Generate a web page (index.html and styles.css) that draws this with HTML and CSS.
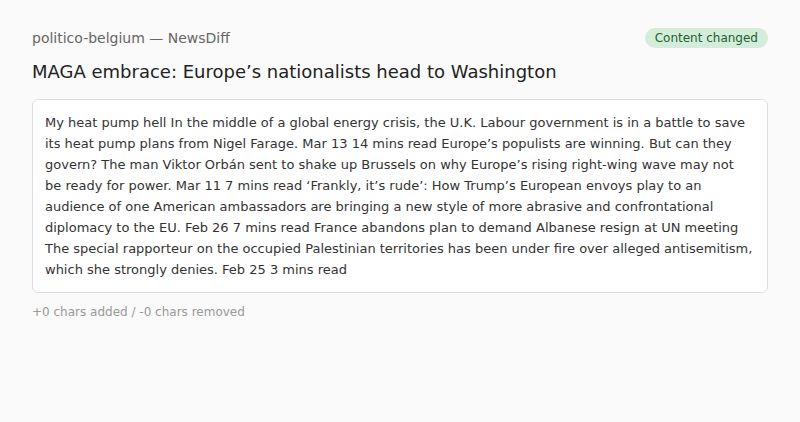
FILE: index.html
```html
<!DOCTYPE html>
<html>
<head>
<meta charset="utf-8">
<link rel="stylesheet" href="styles.css">
</head>
<body>
<div class="page">
  <div class="header">
    <span class="source">politico-belgium — NewsDiff</span>
    <span class="badge">Content changed</span>
  </div>
  <h1 class="title">MAGA embrace: Europe’s nationalists head to Washington</h1>
  <div class="content">My heat pump hell In the middle of a global energy crisis, the U.K. Labour government is in a battle to save its heat pump plans from Nigel Farage. Mar 13 14 mins read Europe’s populists are winning. But can they govern? The man Viktor Orbán sent to shake up Brussels on why Europe’s rising right-wing wave may not be ready for power. Mar 11 7 mins read ‘Frankly, it’s rude’: How Trump’s European envoys play to an audience of one American ambassadors are bringing a new style of more abrasive and confrontational diplomacy to the EU. Feb 26 7 mins read France abandons plan to demand Albanese resign at UN meeting The special rapporteur on the occupied Palestinian territories has been under fire over alleged antisemitism, which she strongly denies. Feb 25 3 mins read</div>
  <div class="stats">+0 chars added / -0 chars removed</div>
</div>
</body>
</html>
```
FILE: styles.css
```css
html, body {
  margin: 0;
  padding: 0;
  background: #fafafa;
  font-family: "DejaVu Sans", sans-serif;
}
.page {
  padding: 28px 32px;
}
.header {
  display: flex;
  justify-content: space-between;
  align-items: center;
  height: 20px;
}
.source {
  font-size: 14px;
  color: #666;
}
.badge {
  font-size: 12px;
  color: #1e5e2e;
  background: #d4edda;
  border-radius: 10px;
  padding: 2px 10px;
  line-height: 16px;
}
.title {
  font-size: 18px;
  font-weight: normal;
  color: #222;
  margin: 13px 0 16px;
  line-height: 22px;
}
.content {
  background: #fff;
  border: 1px solid #ddd;
  border-radius: 6px;
  padding: 12px 14px 12px 12px;
  font-size: 13px;
  line-height: 21px;
  color: #333;
}
.stats {
  margin-top: 10px;
  font-size: 12px;
  color: #999;
  line-height: 18px;
}
```
